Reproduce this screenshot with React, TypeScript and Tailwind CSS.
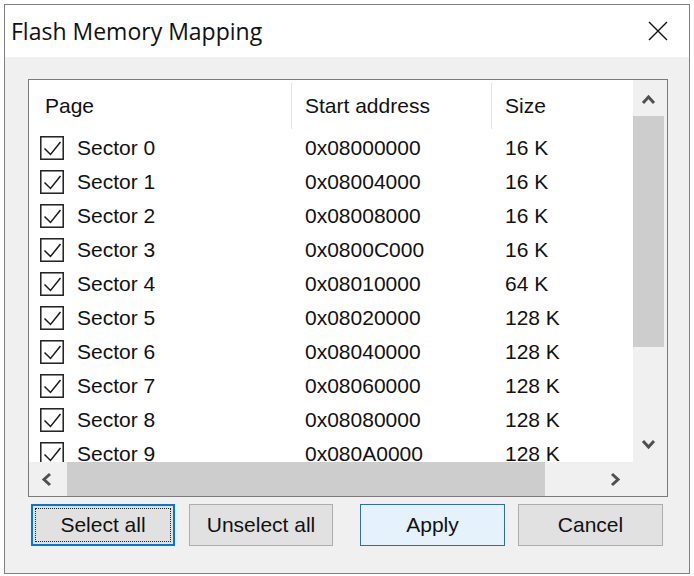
const ROWS: [string, string, string][] = [
  ["Sector 0", "0x08000000", "16 K"],
  ["Sector 1", "0x08004000", "16 K"],
  ["Sector 2", "0x08008000", "16 K"],
  ["Sector 3", "0x0800C000", "16 K"],
  ["Sector 4", "0x08010000", "64 K"],
  ["Sector 5", "0x08020000", "128 K"],
  ["Sector 6", "0x08040000", "128 K"],
  ["Sector 7", "0x08060000", "128 K"],
  ["Sector 8", "0x08080000", "128 K"],
  ["Sector 9", "0x080A0000", "128 K"],
];

function Check() {
  return (
    <svg width="24" height="24" viewBox="0 0 24 24" className="shrink-0">
      <rect x="0.75" y="0.75" width="22.5" height="22.5" fill="white" stroke="#262626" strokeWidth="1.6" />
      <polyline points="4.5,12.5 10.5,18.5 20.5,6" fill="none" stroke="#1a1a1a" strokeWidth="1.5" />
    </svg>
  );
}

// chevron arrow used by scroll buttons
function Arrow({ dir }: { dir: "up" | "down" | "left" | "right" }) {
  const pts = {
    up: "2,9 7.5,3 13,9",
    down: "2,3 7.5,9 13,3",
    left: "9,2 3,7.5 9,13",
    right: "3,2 9,7.5 3,13",
  }[dir];
  const v = dir === "up" || dir === "down";
  return (
    <svg width={v ? 15 : 12} height={v ? 12 : 15} viewBox={v ? "0 0 15 12" : "0 0 12 15"}>
      <polyline points={pts} fill="none" stroke="#505050" strokeWidth="3" />
    </svg>
  );
}

function Btn({ label, kind, cls }: { label: string; kind?: "focus" | "default"; cls: string }) {
  if (kind === "focus")
    return (
      <div className={"h-[42px] border-2 border-[#0078d7] bg-[#e1e1e1] p-[2px] " + cls}>
        <div className="h-full border border-dotted border-[#222] flex items-center justify-center">{label}</div>
      </div>
    );
  return (
    <div
      className={
        "h-[42px] border flex items-center justify-center " +
        (kind === "default" ? "border-[#2a6fa8] bg-[#e5f1fb] " : "border-[#adadad] bg-[#e1e1e1] ") +
        cls
      }
    >
      {label}
    </div>
  );
}

export default function App() {
  return (
    <div className="w-[694px] h-[576px] bg-white pt-[4px] pl-[4px] text-[#111] font-['Liberation_Sans',sans-serif]">
      <div className="w-[686px] h-[570px] border border-[#808080] bg-[#f0f0f0] flex flex-col">
        <div className="h-[52px] shrink-0 bg-white flex items-center justify-between pl-[6px] pr-[21px]">
          <span className="text-[23px] font-['Open_Sans',sans-serif] text-[#111]">Flash Memory Mapping</span>
          <svg width="20" height="20" viewBox="0 0 20 20">
            <path d="M1 1 L19 19 M19 1 L1 19" stroke="#111" strokeWidth="1.4" />
          </svg>
        </div>

        <div className="pl-[23px] pt-[22px]">
          <div className="w-[640px] h-[418px] border border-[#7a7a7a] bg-white grid grid-cols-[1fr_34px] grid-rows-[1fr_34px] text-[21px]">
            <div className="overflow-hidden">
              <div className="w-[700px]">
                <div className="h-[51px] flex items-center">
                  <div className="w-[262px] pl-[16px]">Page</div>
                  <div className="w-[1px] h-[46px] bg-[#e3e3e3]" />
                  <div className="w-[199px] pl-[13px]">Start address</div>
                  <div className="w-[1px] h-[46px] bg-[#e3e3e3]" />
                  <div className="flex-1 pl-[13px]">Size</div>
                </div>
                {ROWS.map(([name, addr, size]) => (
                  <div key={name} className="h-[34px] flex items-center">
                    <div className="w-[263px] pl-[11px] flex items-center gap-[13px]">
                      <Check />
                      <span>{name}</span>
                    </div>
                    <div className="w-[200px] pl-[13px]">{addr}</div>
                    <div className="flex-1 pl-[13px]">{size}</div>
                  </div>
                ))}
              </div>
            </div>

            <div className="bg-[#f0f0f0] flex flex-col">
              <div className="h-[36px] flex items-center justify-center pr-[3px] pt-[4px]"><Arrow dir="up" /></div>
              <div className="h-[231px] bg-[#cdcdcd] mr-[3px]" />
              <div className="flex-1" />
              <div className="h-[36px] flex items-center justify-center pr-[3px]"><Arrow dir="down" /></div>
            </div>

            <div className="bg-[#f0f0f0] flex items-stretch">
              <div className="w-[36px] flex items-center justify-center"><Arrow dir="left" /></div>
              <div className="w-[478px] ml-[2px] bg-[#cdcdcd]" />
              <div className="flex-1" />
              <div className="w-[36px] flex items-center justify-center"><Arrow dir="right" /></div>
            </div>
            <div className="bg-[#f0f0f0]" />
          </div>

          <div className="flex mt-[7px] pl-[3px] text-[21px]">
            <Btn label="Select all" kind="focus" cls="w-[144px]" />
            <Btn label="Unselect all" cls="w-[144px] ml-[14px]" />
            <Btn label="Apply" kind="default" cls="w-[145px] ml-[27px]" />
            <Btn label="Cancel" cls="w-[145px] ml-[13px]" />
          </div>
        </div>
      </div>
    </div>
  );
}
